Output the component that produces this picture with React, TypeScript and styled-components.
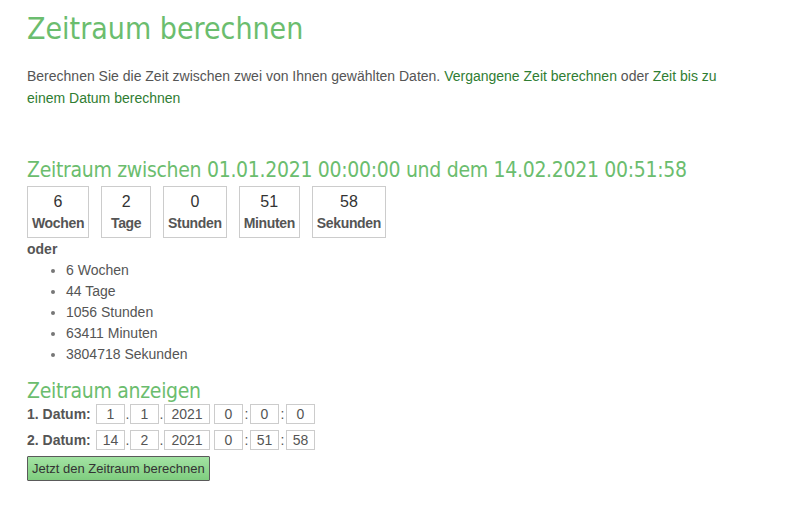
import { FC } from 'react';

import styled, { createGlobalStyle } from 'styled-components';

const units = [
  { value: '6', label: 'Wochen' },
  { value: '2', label: 'Tage' },
  { value: '0', label: 'Stunden' },
  { value: '51', label: 'Minuten' },
  { value: '58', label: 'Sekunden' },
];

const totals = ['6 Wochen', '44 Tage', '1056 Stunden', '63411 Minuten', '3804718 Sekunden'];

const dates = [
  { label: '1. Datum:', date: ['1', '1', '2021'], time: ['0', '0', '0'] },
  { label: '2. Datum:', date: ['14', '2', '2021'], time: ['0', '51', '58'] },
];

const App: FC = () => {
  return (
    <Page>
      <GlobalStyle />
      <Title>Zeitraum berechnen</Title>
      <Intro>
        Berechnen Sie die Zeit zwischen zwei von Ihnen gewählten Daten.{' '}
        <Link href='#'>Vergangene Zeit berechnen</Link> oder{' '}
        <Link href='#'>Zeit bis zu einem Datum berechnen</Link>
      </Intro>

      <Heading>Zeitraum zwischen 01.01.2021 00:00:00 und dem 14.02.2021 00:51:58</Heading>
      <Boxes>
        {units.map((u) => (
          <Box key={u.label}>
            <BoxValue>{u.value}</BoxValue>
            <BoxLabel>{u.label}</BoxLabel>
          </Box>
        ))}
      </Boxes>
      <Oder>oder</Oder>
      <Totals>
        {totals.map((t) => (
          <li key={t}>{t}</li>
        ))}
      </Totals>

      <Heading $tight>Zeitraum anzeigen</Heading>
      <Form>
        {dates.map((d) => (
          <Row key={d.label}>
            <RowLabel>{d.label}</RowLabel>
            <Field value={d.date[0]} readOnly />
            <Sep>.</Sep>
            <Field value={d.date[1]} readOnly />
            <Sep>.</Sep>
            <Field value={d.date[2]} readOnly $wide />
            <Gap />
            <Field value={d.time[0]} readOnly />
            <Sep $wide>:</Sep>
            <Field value={d.time[1]} readOnly />
            <Sep $wide>:</Sep>
            <Field value={d.time[2]} readOnly />
          </Row>
        ))}
        <Button type='button'>Jetzt den Zeitraum berechnen</Button>
      </Form>
    </Page>
  );
};

const GlobalStyle = createGlobalStyle`
  body {
    margin: 0;
    background: #fff;
    font-family: 'Liberation Sans', Arial, sans-serif;
    color: #555;
  }
`;

const Page = styled.div`
  padding: 9px 27px 40px;
`;

const Title = styled.h1`
  margin: 0;
  font-family: 'DejaVu Sans Condensed', 'DejaVu Sans', sans-serif;
  font-weight: normal;
  font-size: 30px;
  line-height: 40px;
  color: #6bbd6e;
`;

const Intro = styled.p`
  margin: 16px 0 0;
  font-size: 14px;
  line-height: 22px;
  max-width: 700px;
`;

const Link = styled.a`
  color: #2f7d32;
  text-decoration: none;
`;

const Heading = styled.h2<{ $tight?: boolean }>`
  margin: ${(p) => (p.$tight ? '13px' : '48px')} 0 0;
  font-family: 'DejaVu Sans Condensed', 'DejaVu Sans', sans-serif;
  font-weight: normal;
  font-size: 21px;
  letter-spacing: -0.3px;
  line-height: 26px;
  color: #6bbd6e;
`;

const Boxes = styled.div`
  display: flex;
  gap: 12px;
  margin-top: 3px;
`;

const Box = styled.div`
  min-width: 40px;
  border: 1px solid #ccc;
  padding: 4px 4px;
  text-align: center;
`;

const BoxValue = styled.div`
  font-size: 16px;
  line-height: 22px;
  color: #333;
`;

const BoxLabel = styled.div`
  font-size: 14px;
  font-weight: bold;
  letter-spacing: -0.35px;
  line-height: 20px;
`;

const Oder = styled.div`
  margin-top: 2px;
  font-size: 14px;
  font-weight: bold;
  line-height: 18px;
`;

const Totals = styled.ul`
  margin: 2px 0 0;
  padding-left: 39px;
  font-size: 14px;
  line-height: 21px;

  li::marker {
    color: #777;
  }
`;

const Form = styled.form`
  margin-top: 0;
`;

const Row = styled.div`
  display: flex;
  align-items: center;
  height: 20px;
  margin-bottom: 6px;
`;

const RowLabel = styled.span`
  width: 69px;
  font-size: 14px;
  font-weight: bold;
`;

const Field = styled.input<{ $wide?: boolean }>`
  box-sizing: border-box;
  width: ${(p) => (p.$wide ? '46px' : '29px')};
  height: 20px;
  padding: 0;
  border: 1px solid #ccc;
  font-family: 'Liberation Sans', Arial, sans-serif;
  font-size: 14px;
  color: #555;
  text-align: center;
  outline: none;
`;

const Sep = styled.span<{ $wide?: boolean }>`
  width: ${(p) => (p.$wide ? '7px' : '5px')};
  text-align: center;
  font-size: 14px;
`;

const Gap = styled.span`
  width: 4px;
`;

const Button = styled.button`
  display: block;
  height: 25px;
  padding: 0 4px;
  border: 1px solid #5a5a5a;
  border-radius: 1px;
  background: linear-gradient(#a3e3a3, #7fcd7f);
  font-family: 'Liberation Sans', Arial, sans-serif;
  font-size: 13px;
  color: #333;
`;

export default App;
